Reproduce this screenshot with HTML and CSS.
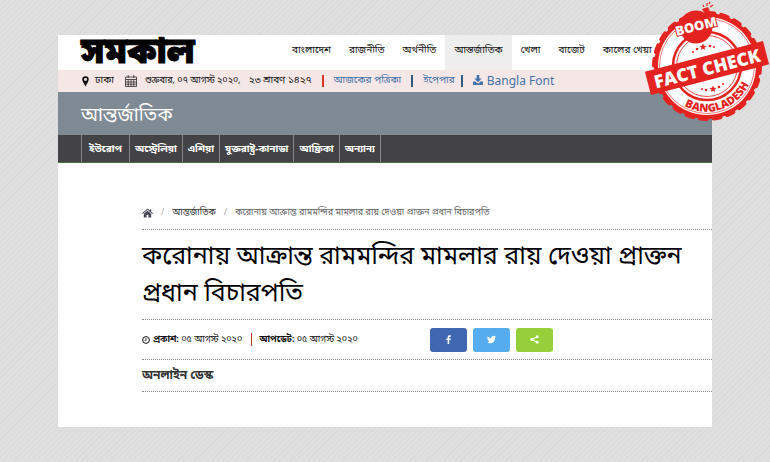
FILE: index.html
```html
<!DOCTYPE html>
<html lang="bn">
<head>
<meta charset="utf-8">
<meta name="viewport" content="width=device-width, initial-scale=1">
<title>সমকাল</title>
<link rel="stylesheet" href="styles.css">
</head>
<body>
<div class="page">
  <header class="masthead">
    <a class="logo" href="#">সমকাল</a>
    <nav class="main-nav">
      <a href="#">বাংলাদেশ</a>
      <a href="#">রাজনীতি</a>
      <a href="#">অর্থনীতি</a>
      <a class="current" href="#">আন্তর্জাতিক</a>
      <a href="#">খেলা</a>
      <a href="#">বাজেট</a>
      <a href="#">কালের খেয়া</a>
    </nav>
  </header>
  <div class="datebar">
    <svg class="pin" viewBox="0 0 8 12"><path fill-rule="evenodd" d="M4 0a3.7 3.7 0 0 1 3.7 3.8C7.700 6 5.500 9 4 11.700 2.500 9 .3 6 .3 3.800A3.700 3.700 0 0 1 4 0zM4 2.100a1.700 1.700 0 1 0 0 3.400 1.700 1.700 0 0 0 0-3.400z"/></svg>
    <span>ঢাকা</span>
    <svg class="calendar" viewBox="0 0 12 12"><path d="M.5 2h11v9.500H.5zM.5 4.500h11M.5 7h11M.5 9.200h11M3.200 4.500v7M6 4.500v7M8.800 4.500v7M3.200 0v3M8.800 0v3" fill="none" stroke="currentColor" stroke-width=".7"/></svg>
    <span class="en-date">শুক্রবার, ০৭ আগস্ট ২০২০,</span>
    <span class="bn-date">২৩ শ্রাবণ ১৪২৭</span>
    <i class="bar bar-red"></i>
    <a href="#">আজকের পত্রিকা</a>
    <i class="bar"></i>
    <a href="#">ইপেপার</a>
    <i class="bar bar-tight"></i>
    <a class="font-link" href="#"><svg class="download" viewBox="0 0 10 10"><path d="M3.700 0h2.600v3.500h2.400L5 7.200 1.300 3.500h2.400zM0 6.500h2.500L5 8.800l2.500-2.300H10V10H0z"/></svg>Bangla Font</a>
  </div>
  <div class="section-title">আন্তর্জাতিক</div>
  <nav class="sub-nav">
    <a href="#">ইউরোপ</a>
    <a href="#">অস্ট্রেলিয়া</a>
    <a href="#">এশিয়া</a>
    <a href="#">যুক্তরাষ্ট্র-কানাডা</a>
    <a href="#">আফ্রিকা</a>
    <a href="#">অন্যান্য</a>
  </nav>
  <main class="article">
    <nav class="crumbs">
      <a href="#" aria-label="হোম"><svg class="home" viewBox="0 0 12 10"><path d="M6 0l2.500 2.200V.8h1.500v2.700L12 5.300l-.7.800L6 1.500.7 6.100 0 5.300zM6 2.500l4 3.400V10H7V7H5v3H2V5.900z"/></svg></a>
      <span class="slash">/</span>
      <a class="crumb-section" href="#">আন্তর্জাতিক</a>
      <span class="slash">/</span>
      <span>করোনায় আক্রান্ত রামমন্দির মামলার রায় দেওয়া প্রাক্তন প্রধান বিচারপতি</span>
    </nav>
    <h1>করোনায় আক্রান্ত রামমন্দির মামলার রায় দেওয়া প্রাক্তন প্রধান বিচারপতি</h1>
    <div class="meta">
      <div class="dates">
        <svg class="clock" viewBox="0 0 8 8"><circle cx="4" cy="4" r="3.400" fill="none" stroke="currentColor"/><path d="M4 2v2.300H2.500" fill="none" stroke="currentColor" stroke-width=".8"/></svg>
        <span><b>প্রকাশ:</b> ০৫ আগস্ট ২০২০</span>
        <i class="date-rule"></i>
        <span><b>আপডেট:</b> ০৫ আগস্ট ২০২০</span>
      </div>
      <div class="share">
        <button class="facebook" aria-label="Facebook"><svg viewBox="0 0 10 10"><path d="M4 10V5.500H2.500V3.800H4V2.600C4 1 4.900.3 6.200.3h1.300V2h-.9C6 2 5.800 2.300 5.800 2.800v1h1.700l-.3 1.700H5.800V10z"/></svg></button>
        <button class="twitter" aria-label="Twitter"><svg viewBox="0 0 10 10"><path d="M10 2l-1 1c.1 3.600-2.500 6.200-5.700 6.200C2 9.200 1 8.900 0 8.300c1.200.1 2.200-.2 3-.8-1-.1-1.600-.7-1.900-1.500h.9C1 5.700.4 4.900.4 3.900l.9.300C.4 3.500.1 2.400.7 1.400 1.800 2.700 3.200 3.400 4.900 3.500 4.500 1.900 5.700.8 6.900.8c.6 0 1.100.2 1.500.6L9.700.9 8.900 2.100z"/></svg></button>
        <button class="more" aria-label="Share"><svg viewBox="0 0 10 10"><path d="M8 2L2 5l6 3" fill="none" stroke="#fff" stroke-width="1.200"/><circle cx="8" cy="2" r="1.600"/><circle cx="2" cy="5" r="1.600"/><circle cx="8" cy="8" r="1.600"/></svg></button>
      </div>
    </div>
    <p class="byline">অনলাইন ডেস্ক</p>
  </main>
</div>
<svg class="stamp" viewBox="0 0 134 130" role="img" aria-label="BOOM Fact Check Bangladesh">
  <defs>
    <path id="arc" d="M48.500 106A46 46 0 0 0 116 74"/>
    <path id="star" d="M0-3.500L1-1.200 3.400-1 1.500.7 2.100 3 0 1.700-2.100 3-1.500.7-3.400-1-1-1.200z"/>
  </defs>
  <circle cx="71" cy="66" r="53" fill="#e42320"/>
  <circle cx="71" cy="66" r="53" fill="none" stroke="#e42320" stroke-width="4" stroke-linecap="round" stroke-dasharray="7 6.875"/>
  <circle cx="71" cy="66" r="49" fill="#fff"/>
  <circle cx="71" cy="66" r="47.500" fill="none" stroke="#e42320" stroke-width=".6"/>
  <circle cx="71" cy="66" r="34" fill="none" stroke="#e42320" stroke-width="2.500"/>
  <circle cx="71" cy="66" r="30.500" fill="none" stroke="#e42320" stroke-width=".8"/>
  <g fill="#e42320"><use href="#star" x="67" y="47"/><use href="#star" x="77" y="89"/><circle cx="57" cy="52" r="1"/><circle cx="61" cy="49" r="1.300"/><circle cx="74" cy="46" r="1.300"/><circle cx="78" cy="47" r="1"/><circle cx="66" cy="89" r="1"/><circle cx="70" cy="90" r="1.300"/><circle cx="83" cy="87" r="1.300"/><circle cx="87" cy="84" r="1"/></g>
  <text class="stamp-place"><textPath href="#arc">BANGLADESH</textPath></text>
  <circle cx="60" cy="27" r="16.500" fill="#e42320"/>
  <path d="M66 9l6-2 3 7-5 2z" fill="#e42320"/>
  <path d="M71 6V3M67 5l1 2M74 7l3-2M74 2l-1 2" stroke="#e42320" stroke-width="1.200"/>
  <g transform="rotate(-14.500 71 68)"><rect x="10" y="56" width="122" height="24" fill="#e42320"/><text class="stamp-main" x="71" y="75">FACT CHECK</text></g>
  <text class="stamp-boom" transform="rotate(-14 60 26)" x="60" y="31">BOOM</text>
</svg>
</body>
</html>
```
FILE: styles.css
```css
* { box-sizing: border-box; }
body {
  margin: 0;
  padding: 35px 58px;
  position: relative;
  font: 10px/16px "Noto Sans Bengali", "Noto Sans", sans-serif;
  color: #111;
  background: repeating-linear-gradient(135deg, #dfdfdf 0 3px, #dadada 3px 4px);
}
a { color: inherit; text-decoration: none; }
svg { fill: currentColor; flex: none; }
.page { background: #fff; padding-bottom: 35px; }
.masthead { display: flex; height: 35px; padding-left: 23px; }
.logo { width: 202px; font-size: 36px; font-weight: 900; line-height: 38px; color: #000; -webkit-text-stroke: 1px #000; }
.main-nav { display: flex; white-space: nowrap; }
.main-nav a { padding: 0 9px; line-height: 31px; }
.main-nav .current { background: #eee; }
.datebar { display: flex; align-items: center; height: 22px; padding-left: 24px; background: #f6e7e7; white-space: nowrap; }
.pin { width: 7px; height: 11px; margin-right: 6px; }
.calendar { width: 12px; height: 12px; margin: 0 8px 0 11px; }
.en-date { font-size: 9px; }
.bn-date { margin-left: 8px; }
.datebar a { color: #4472a8; }
.datebar .font-link { font: 12px/16px "Noto Sans", sans-serif; }
.bar { width: 2px; height: 12px; margin: 0 10px; background: #345a80; }
.bar-red { background: #d32; }
.bar-tight { margin-left: 6px; }
.download { width: 10px; height: 10px; margin-right: 4px; }
.section-title { height: 43px; padding-left: 23px; font-size: 19px; line-height: 49px; color: #fff; background: #808a95; }
.sub-nav { display: flex; height: 28px; padding-left: 23px; color: #fff; background: #434346; border-bottom: 1px solid #4b7044; font-weight: bold; white-space: nowrap; }
.sub-nav a { padding: 0 5px; line-height: 29px; border-right: 1px solid #85858a; }
.sub-nav a:first-child { padding: 0 7px; border-left: 1px solid #85858a; }
.article { padding: 40px 0 0 84px; }
.crumbs { display: flex; align-items: center; height: 27px; padding-bottom: 7px; border-bottom: 1px dotted #888; font-size: 9px; color: #666; white-space: nowrap; }
.crumbs a { display: flex; color: #333; }
.home { width: 11px; height: 10px; color: #445; }
.slash { margin: 0 8px; color: #aaa; }
h1 { margin: 0; padding: 9px 0 6px; font-size: 25px; font-weight: normal; line-height: 37px; color: #000; border-bottom: 1px dotted #888; }
.meta { display: flex; align-items: center; height: 40px; border-bottom: 1px dotted #888; }
.dates { display: flex; align-items: center; width: 288px; font-size: 9px; white-space: nowrap; }
.clock { width: 8px; height: 8px; margin-right: 3px; }
.date-rule { width: 1px; height: 13px; margin: 0 7px 0 9px; background: #b33; }
.share { display: flex; gap: 6px; }
.share button { display: flex; align-items: center; justify-content: center; width: 37px; height: 24px; padding: 0; border: 0; border-radius: 3px; color: #fff; }
.share svg { width: 9px; height: 9px; }
.facebook { background: #4267b2; }
.twitter { background: #55acee; }
.more { background: #95d03a; }
.byline { margin: 0; padding: 8px 0 7px; font-size: 12px; font-weight: bold; color: #333; border-bottom: 1px dotted #888; }
.stamp { position: absolute; top: 0; right: 0; width: 134px; height: 130px; }
.stamp text { font-family: "Open Sans", sans-serif; font-weight: 800; }
.stamp-main { font-size: 18px; fill: #fff; text-anchor: middle; }
.stamp-boom { font-size: 13px; fill: #fff; stroke: #e42320; stroke-width: 2px; paint-order: stroke; text-anchor: middle; }
.stamp-place { font-size: 11px; fill: #e42320; }
```
